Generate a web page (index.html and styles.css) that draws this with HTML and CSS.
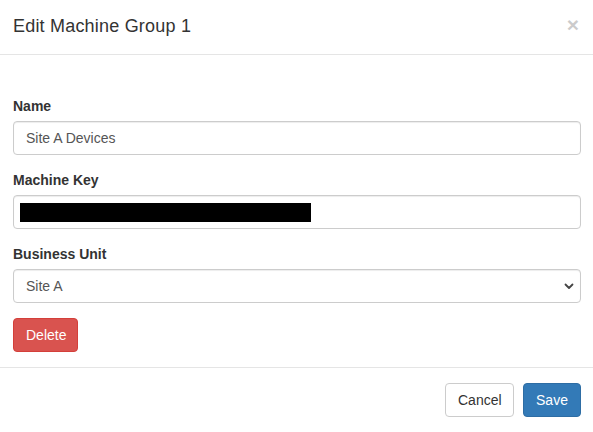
FILE: index.html
```html
<!DOCTYPE html>
<html>
<head>
<meta charset="utf-8">
<link rel="stylesheet" href="styles.css">
</head>
<body>
<div class="modal">
  <div class="modal-header">
    <h4 class="modal-title">Edit Machine Group 1</h4>
    <button class="close" type="button">×</button>
  </div>
  <div class="modal-body">
    <div class="form-group">
      <label class="label">Name</label>
      <div class="form-control">Site A Devices</div>
    </div>
    <div class="form-group">
      <label class="label">Machine Key</label>
      <div class="form-control"><span class="redacted"></span></div>
    </div>
    <div class="form-group">
      <label class="label">Business Unit</label>
      <div class="form-control select">
        <span>Site A</span>
        <svg class="chevron" width="10" height="7" viewBox="0 0 10 7"><path d="M1.5 1.5 L5 5 L8.5 1.5" fill="none" stroke="#444" stroke-width="1.8" stroke-linecap="round" stroke-linejoin="round"/></svg>
      </div>
    </div>
    <button class="btn btn-danger" type="button">Delete</button>
  </div>
  <div class="modal-footer">
    <button class="btn btn-default" type="button">Cancel</button>
    <button class="btn btn-primary" type="button">Save</button>
  </div>
</div>
</body>
</html>
```

FILE: styles.css
```css
html, body {
  margin: 0;
  padding: 0;
  background: #fff;
}
body {
  font-family: "Liberation Sans", Arial, sans-serif;
  font-size: 14px;
  line-height: 20px;
  color: #333;
}
.modal {
  width: 593px;
  height: 432px;
  overflow: hidden;
}
.modal-header {
  display: flex;
  align-items: flex-start;
  justify-content: space-between;
  padding: 13px 14px 15px 13px;
  border-bottom: 1px solid #e5e5e5;
}
.modal-title {
  margin: 0;
  font-size: 18px;
  font-weight: 500;
  line-height: 26px;
  letter-spacing: 0.2px;
  color: #333;
}
.close {
  background: none;
  border: 0;
  padding: 0;
  margin-top: 1px;
  font-family: "Liberation Sans", Arial, sans-serif;
  font-size: 21px;
  font-weight: bold;
  line-height: 21px;
  color: #000;
  opacity: 0.2;
}
.modal-body {
  padding: 41px 12px 15px 13px;
}
.form-group {
  margin-bottom: 15px;
}
.label {
  display: block;
  margin-bottom: 5px;
  font-weight: bold;
  color: #333;
}
.form-control {
  box-sizing: border-box;
  height: 34px;
  padding: 6px 12px;
  border: 1px solid #ccc;
  border-radius: 4px;
  box-shadow: inset 0 1px 1px rgba(0,0,0,0.075);
  color: #555;
  font-size: 14px;
  line-height: 20px;
}
.redacted {
  display: block;
  width: 291px;
  height: 19px;
  margin: 1px 0 0 -6px;
  background: #000;
}
.select {
  display: flex;
  align-items: center;
  justify-content: space-between;
  padding-right: 6px;
}
.chevron {
  display: block;
}
.btn {
  box-sizing: border-box;
  height: 34px;
  padding: 6px 12px;
  border: 1px solid transparent;
  border-radius: 4px;
  font-family: "Liberation Sans", Arial, sans-serif;
  font-size: 14px;
  line-height: 20px;
  cursor: pointer;
}
.btn-danger {
  width: 65px;
  background: #d9534f;
  border-color: #d43f3a;
  color: #fff;
}
.btn-default {
  width: 69px;
  background: #fff;
  border-color: #ccc;
  color: #333;
}
.btn-primary {
  width: 58px;
  background: #337ab7;
  border-color: #2e6da4;
  color: #fff;
}
.modal-footer {
  display: flex;
  justify-content: flex-end;
  gap: 9px;
  padding: 15px 12px 15px 13px;
  border-top: 1px solid #e5e5e5;
}
```
